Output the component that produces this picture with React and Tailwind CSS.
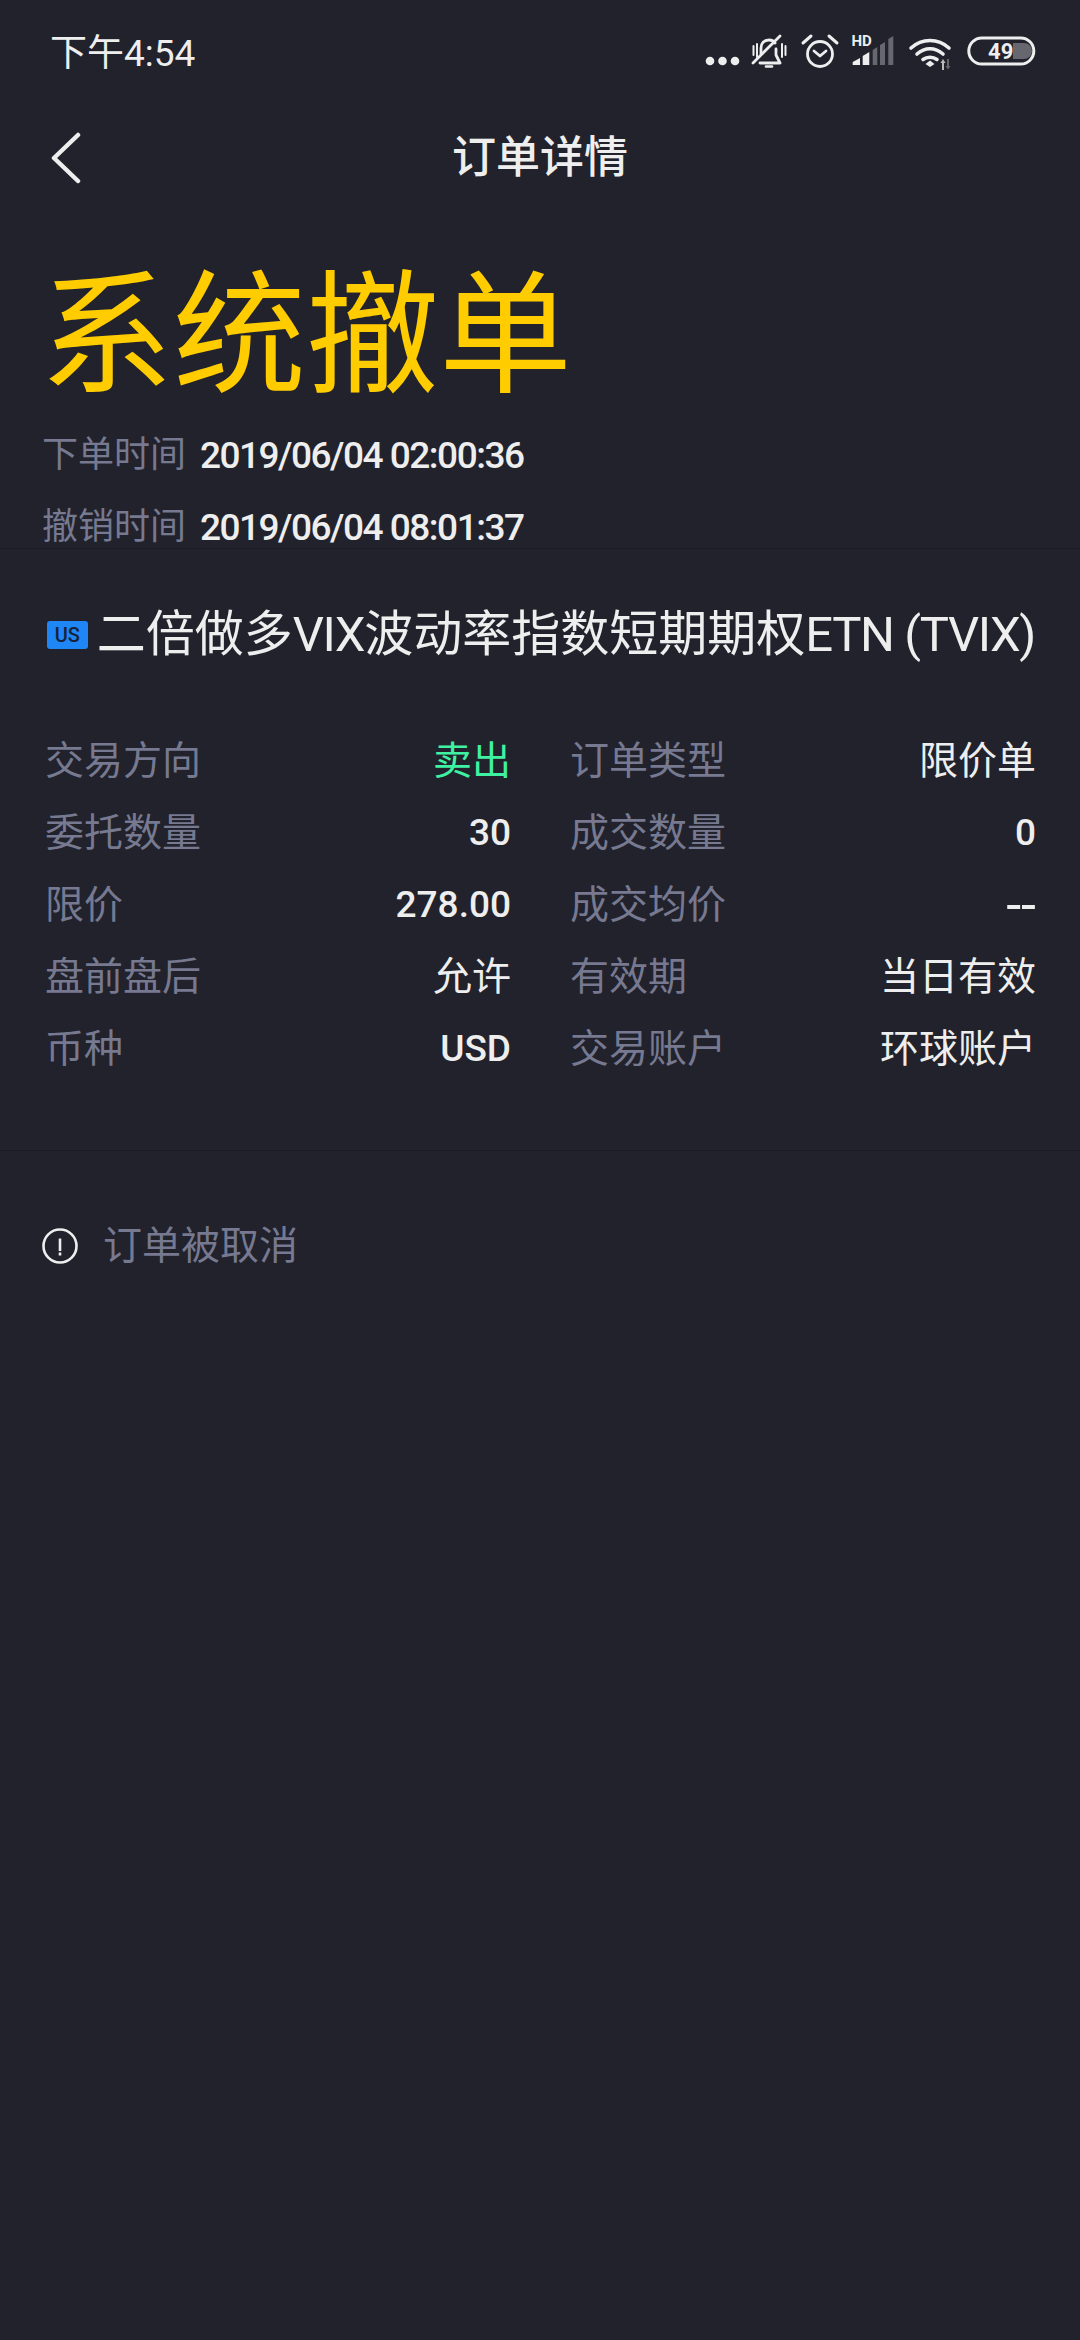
import React from 'react';

const FONT = "font-['Roboto','Noto_Sans_CJK_SC',sans-serif]";

const DETAILS = [
  ['交易方向', '卖出', '订单类型', '限价单'],
  ['委托数量', '30', '成交数量', '0'],
  ['限价', '278.00', '成交均价', '--'],
  ['盘前盘后', '允许', '有效期', '当日有效'],
  ['币种', 'USD', '交易账户', '环球账户'],
];

function StatusIcons() {
  return (
    <svg width="340" height="42" viewBox="0 0 340 42" fill="none" className="mb-[4px]">
      {/* dots */}
      <circle cx="10" cy="31" r="4.300" fill="#eee" />
      <circle cx="22.500" cy="31" r="4.300" fill="#eee" />
      <circle cx="35" cy="31" r="4.300" fill="#eee" />
      {/* muted bell */}
      <g stroke="#eee" strokeWidth="2.800" strokeLinecap="round" strokeLinejoin="round">
        <path d="M61 24v-6c0-5 3-8 8-8 3 0 5 1 6 3M76 19v6l2 4 2 4H60" />
        <path d="M53 33L80 6" />
        <path d="M53.500 16v9M57 14v13M82 14v13M85.500 16v9" strokeWidth="2" />
        <path d="M66 36.500h6" strokeWidth="2.600" />
      </g>
      {/* alarm */}
      <circle cx="120" cy="24" r="12.500" stroke="#eee" strokeWidth="2.800" />
      <path d="M114 21l6 5 6-5" stroke="#eee" strokeWidth="2.800" strokeLinecap="round" strokeLinejoin="round" />
      <path d="M103 13l8-7M137 13l-8-7" stroke="#eee" strokeWidth="3" strokeLinecap="round" />
      {/* signal */}
      <text x="151.500" y="16" fill="#eee" fontSize="15" fontWeight="700" fontFamily="Roboto">HD</text>
      <path d="M152.700 35v-3l7.300-4v7z" fill="#eee" />
      <path d="M162.700 35V26l6.600-4v13z" fill="#eee" />
      <path d="M172.700 35V20l4.600-3v18zM180 35V15l5-3v23zM188.300 35V9l5-3v29z" fill="#66676f" />
      {/* wifi */}
      <path d="M211 18c11-10 27-10 38 0M217 24c8-7 18-7 26 0" stroke="#eee" strokeWidth="3.600" strokeLinecap="round" />
      <path d="M223 29.500c4-3 10-3 14 0" stroke="#eee" strokeWidth="3.600" strokeLinecap="round" />
      <path d="M225.500 34l4.500-3.500 4.500 3.500-4.500 3z" fill="#eee" />
      <path d="M243 31v9" stroke="#bbb" strokeWidth="2" />
      <path d="M240.500 33l2.500-4 2.500 4z" fill="#bbb" />
      <path d="M248 29v8" stroke="#666" strokeWidth="2" />
      <path d="M245.500 36l2.500 3.500 2.500-3.500z" fill="#666" />
      {/* battery */}
      <path d="M313 13h11a8 8 0 0 1 0 16h-11z" fill="#66676f" />
      <rect x="268.800" y="8" width="65" height="26" rx="13" stroke="#eee" strokeWidth="3" />
      <text x="300.700" y="29" textAnchor="middle" fill="#eee" fontSize="22" fontWeight="700" fontFamily="Roboto">49</text>
    </svg>
  );
}

function DetailValue({ value }) {
  if (value === '卖出') return <span className="text-[39px] text-[#3ff2a2]">{value}</span>;
  if (value === '--') return <span className="text-[54px] leading-none text-[#eeeeee]">{value}</span>;
  if (/^[\d.A-Z]+$/.test(value)) return <span className="text-[37px] font-medium text-[#eeeeee]">{value}</span>;
  return <span className="text-[39px] text-[#eeeeee]">{value}</span>;
}

function DetailCell({ label, value }) {
  return (
    <div className="flex items-center justify-between">
      <span className="text-[39px] text-[#767990]">{label}</span>
      <DetailValue value={value} />
    </div>
  );
}

export default function App() {
  return (
    <div className={`${FONT} min-h-[2340px] w-[1080px] bg-[#21222c] text-[#eeeeee]`}>
      <div className="flex h-[106px] items-center justify-between pl-[50px] pr-[40px]">
        <span className="text-[37px] leading-none">下午4:54</span>
        <StatusIcons />
      </div>

      <div className="relative flex h-[104px] items-center justify-center">
        <svg width="34" height="52" viewBox="0 0 34 52" fill="none" className="absolute left-[49px] top-[26px]">
          <path d="M29 3L5 26l24 23" stroke="#eee" strokeWidth="4.500" strokeLinecap="round" strokeLinejoin="round" />
        </svg>
        <span className="text-[44px] font-medium">订单详情</span>
      </div>

      <div className="border-b border-[#1a1b23] pl-[42px]">
        <h1 className="ml-[-2px] mt-[49px] text-[133px] font-normal leading-[156px] text-[#ffcc00]">系统撤单</h1>
        <div className="mt-[20px] flex h-[41px] items-center leading-[41px]">
          <span className="w-[158px] text-[36px] text-[#767990]">下单时间</span>
          <span className="text-[37px] font-medium tracking-[-1.5px]">2019/06/04 02:00:36</span>
        </div>
        <div className="mt-[31px] flex h-[41px] items-center leading-[41px]">
          <span className="w-[158px] text-[36px] text-[#767990]">撤销时间</span>
          <span className="text-[37px] font-medium tracking-[-1.5px]">2019/06/04 08:01:37</span>
        </div>
      </div>

      <div className="border-b border-[#1a1b23] px-[45px] pb-[65px]">
        <div className="mt-[57px] flex items-center whitespace-nowrap">
          <span className="ml-[2px] flex h-[28px] w-[41px] items-center justify-center rounded-[3px] bg-[#1f87f5] text-[20px] font-medium text-[#15233a]">US</span>
          <span className="ml-[9px] text-[49px] leading-[58px]">
            二倍做多<span className="tracking-[-1.4px]">VIX</span>波动率指数短期期权<span className="tracking-[-1.4px]">ETN (TVIX)</span>
          </span>
        </div>
        <div className="mt-[61px]">
          {DETAILS.map(([l1, v1, l2, v2]) => (
            <div key={l1} className="grid h-[72px] grid-cols-[466px_466px] gap-x-[59px]">
              <DetailCell label={l1} value={v1} />
              <DetailCell label={l2} value={v2} />
            </div>
          ))}
        </div>
      </div>

      <div className="mt-[66px] flex items-center pl-[41px]">
        <svg width="38" height="38" viewBox="0 0 38 38" fill="none">
          <circle cx="19" cy="19" r="16.500" stroke="#eee" strokeWidth="2.600" />
          <path d="M19 11.500v12.500" stroke="#eee" strokeWidth="2.600" />
          <path d="M19 25.500v3" stroke="#eee" strokeWidth="2.600" />
        </svg>
        <span className="ml-[24px] text-[39px] text-[#767990]">订单被取消</span>
      </div>
    </div>
  );
}
